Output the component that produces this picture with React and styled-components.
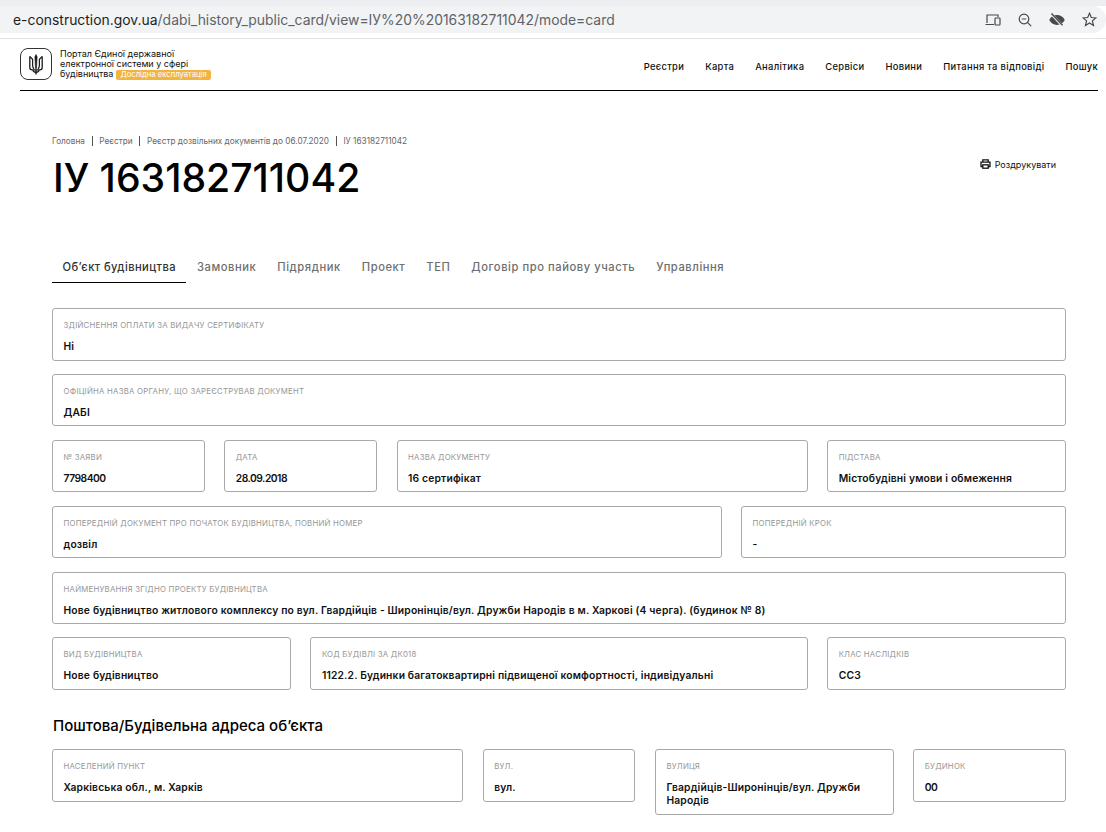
import React from 'react';
import styled, { createGlobalStyle } from 'styled-components';

const Global = createGlobalStyle`
  html, body { margin: 0; padding: 0; background: #fff; }
  body { font-family: Inter, "Liberation Sans", sans-serif; color: #000; }
  * { box-sizing: border-box; }
`;
const Page = styled.div`width: 1106px; height: 832px; overflow: hidden;`;
const Chrome = styled.div`
  height: 39px; padding-top: 6px; background: #fff; border-bottom: 1px solid #dfe1e3;
  box-shadow: inset 0 6px 0 #eceef1;
`;
const UrlBar = styled.div`
  height: 27px; background: #f1f3f4; border-radius: 0 14px 14px 0; display: flex; align-items: center;
  padding: 0 9px 0 13px;
`;
const Url = styled.div`flex: 1; font-size: 13.92px; color: #1f1f1f; white-space: nowrap;`;
const UrlRest = styled.span`color: #5f6368;`;
const BrowserIcons = styled.div`display: flex; align-items: center; gap: 16px; color: #474a4d;`;
const BrowserIcon = styled.span`width: 16px; height: 16px; display: flex; align-items: center; justify-content: center;`;
const Header = styled.header`
  margin: 0 8px 0 20px; height: 52px; display: flex; align-items: center; justify-content: space-between;
  border-bottom: 1px solid #000; padding-bottom: 1px;
`;
const Brand = styled.div`display: flex; align-items: center; gap: 8px;`;
const Crest = styled.div`
  width: 32px; height: 32px; border: 1px solid #333; border-radius: 8px; display: flex; align-items: center; justify-content: center;
`;
const BrandText = styled.div`font-size: 9px; line-height: 10px; color: #111; width: 160px; padding-top: 1px;`;
const Badge = styled.span`
  display: inline-block; background: #f2b441; color: #fff; font-size: 7.7px; line-height: 10px; border-radius: 2px; padding: 0 4px; margin-left: 3px;
`;
const Nav = styled.nav`display: flex; gap: 21px; margin-top: 5px;`;
const NavItem = styled.span`font-size: 9.4px; font-weight: 500; color: #111; white-space: nowrap; letter-spacing: 0.32px;`;
const Content = styled.main`padding: 44px 40px 0 52px;`;
const Crumbs = styled.div`display: flex; align-items: center; gap: 6.7px; font-size: 8.25px; color: #666; height: 11px;`;
const Sep = styled.i`width: 1px; height: 10px; background: #555;`;
const TitleRow = styled.div`display: flex; justify-content: space-between; align-items: flex-start; height: 93px;`;
const Title = styled.h1`margin: 9px 0 0 1px; font-size: 39.2px; line-height: 45px; font-weight: 500; color: #000;`;
const PrintLink = styled.div`
  display: flex; align-items: center; gap: 4px; font-size: 9px; color: #111; margin: 11px 10px 0 0; height: 14px;
`;
const Tabs = styled.div`display: flex; margin: 15px 0 25px;`;
const Tab = styled.div`
  padding: 0 10.5px; height: 29px; line-height: 27px; font-size: 11.2px; font-weight: 500; white-space: nowrap;
  letter-spacing: ${p => p.$active ? '0.4px' : '0.56px'};
  color: ${p => p.$active ? '#333' : '#6f6f6f'};
  border-bottom: 1px solid ${p => p.$active ? '#000' : 'transparent'};
`;
const Grid = styled.div`display: grid; grid-template-columns: repeat(12, 1fr); column-gap: 19.5px; row-gap: 13.4px;`;
const Card = styled.div`
  grid-column: span ${p => p.$span}; min-height: 52.5px; border: 1px solid #a9a9a9; border-radius: 3px; padding: 11px 10.5px 6.5px;
  align-self: start;
`;
const Label = styled.div`font-size: 7.8px; line-height: 10px; color: #969696; text-transform: uppercase; white-space: nowrap; letter-spacing: 0.23px;`;
const Value = styled.div`
  font-size: 10.3px; line-height: 13px; font-weight: 600; color: #111; margin-top: 10px;
  letter-spacing: ${p => p.$numeric ? '-0.5px' : '0.17px'};
`;
const Section = styled.h2`margin: 26.4px 0 13px 1px; font-size: 15px; line-height: 20px; font-weight: 500; color: #000;`;

const rowsA = [
  [12, 'Здійснення оплати за видачу сертифікату', 'Ні'],
  [12, 'Офіційна назва органу, що зареєстрував документ', 'ДАБІ'],
  [2, '№ заяви', '7798400'], [2, 'Дата', '28.09.2018'], [5, 'Назва документу', '16 сертифікат'], [3, 'Підстава', 'Містобудівні умови і обмеження'],
  [8, 'Попередній документ про початок будівництва, повний номер', 'дозвіл'], [4, 'Попередній крок', '-'],
  [12, 'Найменування згідно проекту будівництва', 'Нове будівництво житлового комплексу по вул. Гвардійців - Широнінців/вул. Дружби Народів в м. Харкові (4 черга). (будинок № 8)'],
  [3, 'Вид будівництва', 'Нове будівництво'], [6, 'Код будівлі за ДК018', '1122.2. Будинки багатоквартирні підвищеної комфортності, індивідуальні'], [3, 'Клас наслідків', 'СС3'],
];
const rowsB = [
  [5, 'Населений пункт', 'Харківська обл., м. Харків'], [2, 'Вул.', 'вул.'],
  [3, 'Вулиця', 'Гвардійців-Широнінців/вул. Дружби Народів'], [2, 'Будинок', '00'],
];
const nav = ['Реєстри', 'Карта', 'Аналітика', 'Сервіси', 'Новини', 'Питання та відповіді', 'Пошук'];
const tabs = ['Об\u2019єкт будівництва', 'Замовник', 'Підрядник', 'Проект', 'ТЕП', 'Договір про пайову участь', 'Управління'];
const crumbs = ['Головна', 'Реєстри', 'Реєстр дозвільних документів до 06.07.2020', 'ІУ 163182711042'];

const Trident = () => (
  <svg width="14" height="21" viewBox="0 0 14 21" fill="none" stroke="#1a1a1a">
    <path d="M7 .5 5.900 2.800 6.500 14.500H7.500L8.100 2.800Z" fill="#1a1a1a" strokeWidth=".6" />
    <path d="M.8 2.500V13.500C.8 15 1.800 15.800 3.200 15.800H10.800C12.200 15.800 13.200 15 13.200 13.500V2.500" strokeWidth="1.300" />
    <path d="M.8 2.500 3.600 5.200V11.500C3.600 13 4.200 14 5 14.800M13.200 2.500 10.400 5.200V11.500C10.400 13 9.800 14 9 14.800" strokeWidth="1.200" />
    <path d="M4 16.200C4.300 17.800 5.500 18.400 7 18.400S9.700 17.800 10 16.200" strokeWidth="1.300" />
    <path d="M7 16V20.500" strokeWidth="1.400" />
  </svg>
);
const DeviceIcon = () => (
  <svg width="16" height="12" viewBox="0 0 16 12" fill="none" stroke="currentColor" strokeWidth="1.200">
    <path d="M2 9V1h11v2M.5 10.500H9" /><rect x="10" y="4" width="5" height="7" rx=".8" />
  </svg>
);
const ZoomOutIcon = () => (
  <svg width="14" height="14" viewBox="0 0 14 14" fill="none" stroke="currentColor" strokeWidth="1.200">
    <circle cx="6" cy="6" r="4.800" /><path d="M3.800 6h4.400M9.600 9.600l3.600 3.600" />
  </svg>
);
const EyeOffIcon = () => (
  <svg width="16" height="14" viewBox="0 0 16 14" fill="none" stroke="currentColor" strokeWidth="1.400">
    <path d="M1 7c1.600-2.800 4-4.200 7-4.200S13.400 4.200 15 7c-1.600 2.800-4 4.200-7 4.200S2.600 9.800 1 7Z" fill="currentColor" />
    <path d="M2.500 1.200 13.500 12.800" stroke="#f1f3f4" strokeWidth="2.600" /><path d="M2.500 .6 13.500 12.200" />
  </svg>
);
const StarIcon = () => (
  <svg width="15" height="15" viewBox="0 0 15 15" fill="none" stroke="currentColor" strokeWidth="1.200">
    <path d="M7.500 1.300 9.300 5.500 13.900 5.900 10.400 8.900 11.500 13.400 7.500 11 3.500 13.400 4.600 8.900 1.100 5.900 5.700 5.500Z" />
  </svg>
);
const PrinterIcon = () => (
  <svg width="11" height="10" viewBox="0 0 11 10" fill="none" stroke="#111" strokeWidth="1.300">
    <path d="M2.800 3V.8H8.200V3M2.800 7.500H1V3.200H10V7.500H8.200" /><rect x="2.800" y="5.800" width="5.400" height="3.400" />
  </svg>
);

const Field = ({ span, label, value }) => (
  <Card $span={span}><Label>{label}</Label><Value $numeric={/^[\d.]+$/.test(value)}>{value}</Value></Card>
);

export default function App() {
  return (
    <Page>
      <Global />
      <Chrome>
        <UrlBar>
          <Url>e-construction.gov.ua<UrlRest>/dabi_history_public_card/view=ІУ%20%20163182711042/mode=card</UrlRest></Url>
          <BrowserIcons>
            <BrowserIcon><DeviceIcon /></BrowserIcon>
            <BrowserIcon><ZoomOutIcon /></BrowserIcon>
            <BrowserIcon><EyeOffIcon /></BrowserIcon>
            <BrowserIcon><StarIcon /></BrowserIcon>
          </BrowserIcons>
        </UrlBar>
      </Chrome>
      <Header>
        <Brand>
          <Crest><Trident /></Crest>
          <BrandText>Портал Єдиної державної<br />електронної системи у сфері<br />будівництва<Badge>Дослідна експлуатація</Badge></BrandText>
        </Brand>
        <Nav>{nav.map(n => <NavItem key={n}>{n}</NavItem>)}</Nav>
      </Header>
      <Content>
        <Crumbs>
          {crumbs.map((c, i) => (
            <React.Fragment key={c}>{i > 0 && <Sep />}<span>{c}</span></React.Fragment>
          ))}
        </Crumbs>
        <TitleRow>
          <Title>ІУ 163182711042</Title>
          <PrintLink><PrinterIcon />Роздрукувати</PrintLink>
        </TitleRow>
        <Tabs>{tabs.map((t, i) => <Tab key={t} $active={i === 0}>{t}</Tab>)}</Tabs>
        <Grid>{rowsA.map(r => <Field key={r[1]} span={r[0]} label={r[1]} value={r[2]} />)}</Grid>
        <Section>Поштова/Будівельна адреса об’єкта</Section>
        <Grid>{rowsB.map(r => <Field key={r[1]} span={r[0]} label={r[1]} value={r[2]} />)}</Grid>
      </Content>
    </Page>
  );
}
